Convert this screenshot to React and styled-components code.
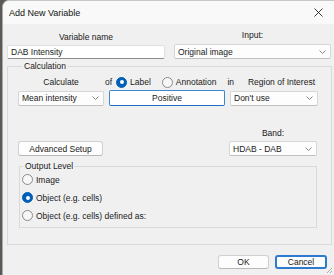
import React from 'react';
import styled, { createGlobalStyle } from 'styled-components';

const GlobalStyle = createGlobalStyle`
  html, body {
    margin: 0;
    padding: 0;
    background: #5d5a55;
    overflow: hidden;
  }
  * {
    box-sizing: border-box;
  }
`;

const FONT = '"Liberation Sans", Arial, sans-serif';

const Dialog = styled.div`
  margin-left: 2px;
  width: 332px;
  height: 275px;
  background: #f0f0f0;
  border-radius: 7px 0 0 0;
  border-left: 1px solid #a9a9a9;
  border-top: 1px solid #c8c8c8;
  display: flex;
  flex-direction: column;
  font-family: ${FONT};
  font-size: 8.5px;
  color: #1a1a1a;
  position: relative;
  overflow: hidden;
`;

const TitleBar = styled.div`
  height: 23px;
  flex-shrink: 0;
  background: #f9f9f9;
  display: flex;
  align-items: center;
  justify-content: space-between;
  padding: 0 11px 0 6px;
  font-size: 9px;
  color: #111;
`;

const Body = styled.div`
  flex: 1;
  display: flex;
  flex-direction: column;
  padding: 6px 2px 0 4px;
`;

const TopRow = styled.div`
  display: grid;
  grid-template-columns: 158px 157px;
  column-gap: 9px;
  align-items: end;
`;

const Field = styled.div`
  display: flex;
  flex-direction: column;
  align-items: stretch;
  gap: ${(p) => p.$gap || 3}px;
`;

const Label = styled.div`
  text-align: center;
  line-height: 10px;
  white-space: nowrap;
`;

const TextInput = styled.div`
  height: ${(p) => p.$h || 14}px;
  background: #fff;
  border: 1px solid ${(p) => (p.$focus ? '#3b87d0' : '#e0e0e0')};
  border-bottom: 1px solid ${(p) => (p.$focus ? '#1f6fc0' : '#8c8c8c')};
  border-radius: 2px;
  display: flex;
  align-items: center;
  justify-content: ${(p) => (p.$center ? 'center' : 'flex-start')};
  padding: 0 3px;
  white-space: nowrap;
`;

const SelectBox = styled.div`
  height: ${(p) => p.$h || 15}px;
  width: ${(p) => (p.$w ? p.$w + 'px' : 'auto')};
  background: #fdfdfd;
  border: 1px solid #d6d6d6;
  border-bottom-color: #c0c0c0;
  border-radius: 2px;
  display: flex;
  align-items: center;
  justify-content: space-between;
  padding: 0 4px 0 3px;
  white-space: nowrap;
`;

const Chevron = () => (
  <svg width="7" height="4" viewBox="0 0 7 4">
    <path d="M0.5 0.5 L3.5 3.5 L6.5 0.5" fill="none" stroke="#7a7a7a" strokeWidth="0.9" />
  </svg>
);

const Select = ({ children, w, h }) => (
  <SelectBox $w={w} $h={h}>
    <span>{children}</span>
    <Chevron />
  </SelectBox>
);

const GroupBox = styled.fieldset`
  margin: ${(p) => p.$m || '0'};
  padding: ${(p) => p.$pad || '0'};
  border: 1px solid #d9d9d9;
  border-radius: 0;
  min-width: 0;
`;

const Legend = styled.legend`
  padding: 0 2px;
  margin-left: ${(p) => p.$ml || 4}px;
  line-height: 9px;
  font-size: 8.5px;
`;

const HeaderRow = styled.div`
  display: flex;
  align-items: center;
  height: 12px;
  margin-top: 5px;
`;

const Cell = styled.div`
  width: ${(p) => p.$w}px;
  margin-left: ${(p) => p.$ml || 0}px;
  text-align: ${(p) => p.$align || 'left'};
  white-space: nowrap;
  flex-shrink: 0;
`;

const ControlRow = styled.div`
  display: grid;
  grid-template-columns: 86px 116px 88px;
  column-gap: 5px;
  margin-top: 2px;
  align-items: center;
`;

const RadioLabel = styled.label`
  display: inline-flex;
  align-items: center;
  gap: 3px;
  white-space: nowrap;
  flex-shrink: 0;
  margin-left: ${(p) => p.$ml || 0}px;
`;

const RadioDot = styled.span`
  width: 11px;
  height: 11px;
  border-radius: 50%;
  flex-shrink: 0;
  box-sizing: border-box;
  background: ${(p) => (p.$on ? '#005fb8' : '#f7f7f7')};
  border: 1px solid ${(p) => (p.$on ? '#005fb8' : '#8a8a8a')};
  display: flex;
  align-items: center;
  justify-content: center;

  &::after {
    content: '';
    display: ${(p) => (p.$on ? 'block' : 'none')};
    width: 4px;
    height: 4px;
    border-radius: 50%;
    background: #fff;
  }
`;

const Radio = ({ on, children, ml }) => (
  <RadioLabel $ml={ml}>
    <RadioDot $on={on} />
    <span>{children}</span>
  </RadioLabel>
);

const BandRow = styled.div`
  display: flex;
  justify-content: space-between;
  align-items: flex-end;
  margin-top: 22px;
  padding-right: 0;
`;

const Button = styled.div`
  width: ${(p) => p.$w}px;
  height: ${(p) => p.$h || 15}px;
  background: #fdfdfd;
  border: ${(p) => (p.$default ? '2px solid #2e7ad1' : '1px solid #d0d0d0')};
  border-bottom-color: ${(p) => (p.$default ? '#2e7ad1' : '#b8b8b8')};
  border-radius: 3px;
  display: flex;
  align-items: center;
  justify-content: center;
  white-space: nowrap;
`;

const OutputList = styled.div`
  display: flex;
  flex-direction: column;
  gap: 7px;
  padding: 3px 0 6px 2px;
`;

const Footer = styled.div`
  display: flex;
  justify-content: flex-end;
  gap: 6px;
  padding: 10px 5px 0 0;
`;

const Grip = styled.svg`
  position: absolute;
  right: 1px;
  bottom: 1px;
`;

const CloseIcon = () => (
  <svg width="9" height="9" viewBox="0 0 9 9">
    <path d="M0.5 0.5 L8.5 8.5 M8.5 0.5 L0.5 8.5" stroke="#222" strokeWidth="0.9" />
  </svg>
);

export default function App() {
  return (
    <>
      <GlobalStyle />
      <Dialog>
        <TitleBar>
          <span>Add New Variable</span>
          <CloseIcon />
        </TitleBar>
        <Body>
          <TopRow>
            <Field>
              <Label>Variable name</Label>
              <TextInput>DAB Intensity</TextInput>
            </Field>
            <Field $gap={4}>
              <Label>Input:</Label>
              <Select h={15}>Original image</Select>
            </Field>
          </TopRow>

          <GroupBox $m="3px 0 0 0" $pad="0 14px 0 10px">
            <Legend>Calculation</Legend>
            <HeaderRow>
              <Cell $w={86} $align="center">Calculate</Cell>
              <Cell $w={10} $ml={1}>of</Cell>
              <Radio on ml={1}>Label</Radio>
              <Radio ml={11}>Annotation</Radio>
              <Cell $w={10} $ml={11}>in</Cell>
              <Cell $w={88} $ml={0} $align="center">Region of Interest</Cell>
            </HeaderRow>
            <ControlRow>
              <Select>Mean intensity</Select>
              <TextInput $focus $center $h={16}>Positive</TextInput>
              <Select>Don't use</Select>
            </ControlRow>
            <BandRow>
              <Button $w={85} $h={15}>Advanced Setup</Button>
              <Field $gap={3}>
                <Label>Band:</Label>
                <Select w={88}>HDAB - DAB</Select>
              </Field>
            </BandRow>
            <GroupBox $m="6px 0 16px 1px" $pad="0 0 0 0">
              <Legend $ml={3}>Output Level</Legend>
              <OutputList>
                <Radio>Image</Radio>
                <Radio on>Object (e.g. cells)</Radio>
                <Radio>Object (e.g. cells) defined as:</Radio>
              </OutputList>
            </GroupBox>
          </GroupBox>

          <Footer>
            <Button $w={51} $h={14}>OK</Button>
            <Button $w={52} $h={14} $default>Cancel</Button>
          </Footer>
        </Body>
        <Grip width="8" height="8" viewBox="0 0 8 8">
          <path d="M7 2 L2 7 M7 5 L5 7" stroke="#9a9a9a" strokeWidth="0.8" />
        </Grip>
      </Dialog>
    </>
  );
}
